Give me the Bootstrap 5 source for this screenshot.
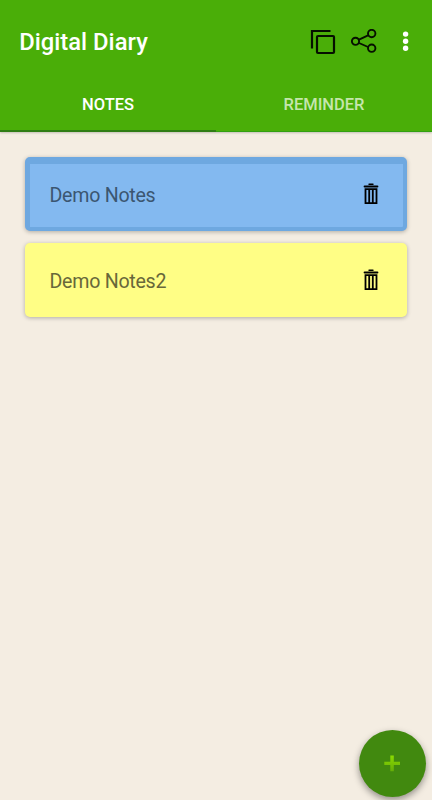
<!DOCTYPE html>
<html lang="en">
<head>
<meta charset="utf-8">
<meta name="viewport" content="width=device-width, initial-scale=1">
<title>Digital Diary</title>
<link href="https://cdn.jsdelivr.net/npm/bootstrap@5.3.0/dist/css/bootstrap.min.css" rel="stylesheet">
<style>
body{font-family:Roboto,"Liberation Sans",sans-serif;background:#f4ede2;height:800px;overflow:hidden}
.app-header{height:132px;background:#4aae08;border-bottom:1px solid #32a010;box-shadow:0 1px 2px rgba(0,0,0,.2)}
.app-bar{height:84px;padding:0 19px 0 19.2px}
.app-title{font-size:23.8px;font-weight:500;line-height:28px;color:#fff}
.app-bar svg,.note svg{display:block}
.bar-btn{border:0;padding:0;line-height:0}
.btn-share{margin-left:15px}
.btn-more{margin-left:24px}
.app-tabs{height:47px}
.app-tabs .nav-link{height:48px;padding:8px 0 0;font-size:16.5px;line-height:26px;font-weight:500;color:#c5e6ac;border-bottom:2px solid transparent;border-radius:0}
.app-tabs .nav-link.active{color:#fff;border-bottom-color:#2f7d14}
.notes-list{padding:25px 25px 0;gap:12px}
.note{height:74px;border:0;border-radius:5px;padding:0 27px 0 24.5px;box-shadow:0 1px 4px rgba(0,0,0,.28)}
.note-title{font-size:19.6px;line-height:24px;font-weight:400;letter-spacing:-.26px;padding-top:3px}
.note-blue{background:#83b9f0;border:solid #6ea8e0;border-width:7px 4px 4px 5px;padding:0 23px 0 19.5px}
.note-blue .note-title{color:#3b5671;padding:0}
.note-blue .bar-btn{margin-top:-4px}
.note-yellow{background:#fffe85}
.note-yellow .note-title{color:#68683a}
.note-yellow .bar-btn{margin-top:-1px}
.fab{width:67px;height:67px;right:6px;bottom:3px;background:#41890f;border:0;box-shadow:0 3px 7px rgba(0,0,0,.4)}
</style>
</head>
<body>
<header class="app-header position-relative">
  <div class="app-bar d-flex align-items-center justify-content-between">
    <h1 class="app-title mb-0">Digital Diary</h1>
    <div class="d-flex align-items-center">
      <button class="btn bar-btn" aria-label="Copy">
        <svg width="26" height="26" viewBox="0 0 26 26" fill="none" stroke="#061000" stroke-width="2.200"><path d="M2 19.500V2h18.500"/><rect x="7" y="7" width="17" height="17" rx="1"/></svg>
      </button>
      <button class="btn bar-btn btn-share" aria-label="Share">
        <svg width="26" height="26" viewBox="0 0 26 26" fill="none" stroke="#061000" stroke-width="1.900"><circle cx="4.500" cy="12.300" r="3.600"/><circle cx="20.700" cy="4.500" r="3.700"/><circle cx="20.700" cy="19.200" r="3.700"/><path d="M8 10.700 17.100 6.400M8 14l9.100 4"/></svg>
      </button>
      <button class="btn bar-btn btn-more" aria-label="More">
        <svg width="12" height="24" viewBox="0 0 12 24" fill="#fff"><circle cx="4.600" cy="4.100" r="2.700"/><circle cx="4.600" cy="11.200" r="2.700"/><circle cx="4.600" cy="18.300" r="2.700"/></svg>
      </button>
    </div>
  </div>
  <ul class="nav nav-fill app-tabs">
    <li class="nav-item col-6"><a class="nav-link active" href="#">NOTES</a></li>
    <li class="nav-item col-6"><a class="nav-link" href="#">REMINDER</a></li>
  </ul>
</header>
<main class="notes-list d-flex flex-column">
  <article class="card note note-blue flex-row align-items-center justify-content-between">
    <span class="note-title">Demo Notes</span>
    <button class="btn bar-btn" aria-label="Delete">
      <svg width="18" height="22" viewBox="0 0 18 22" fill="none" stroke="#000"><path d="M7 1.300h4" stroke-width="1.400" stroke-linecap="round"/><path d="M2.600 3.500h12.800" stroke-width="2" stroke-linecap="round"/><path d="M3.500 6.100h11v14h-11zM7.200 7v12.500M10.800 7v12.500" stroke-width="1.800"/></svg>
    </button>
  </article>
  <article class="card note note-yellow flex-row align-items-center justify-content-between">
    <span class="note-title">Demo Notes2</span>
    <button class="btn bar-btn" aria-label="Delete">
      <svg width="18" height="22" viewBox="0 0 18 22" fill="none" stroke="#000"><path d="M7 1.300h4" stroke-width="1.400" stroke-linecap="round"/><path d="M2.600 3.500h12.800" stroke-width="2" stroke-linecap="round"/><path d="M3.500 6.100h11v14h-11zM7.200 7v12.500M10.800 7v12.500" stroke-width="1.800"/></svg>
    </button>
  </article>
</main>
<button class="btn fab rounded-circle position-fixed d-flex align-items-center justify-content-center p-0" aria-label="Add note">
  <svg width="17" height="17" viewBox="0 0 17 17"><defs><linearGradient id="plus" x1="0" y1="0" x2="0" y2="1"><stop offset="0" stop-color="#8bdc00"/><stop offset="1" stop-color="#65ad08"/></linearGradient></defs><path d="M6.300.5h3.500v6.200h6.200v3.300H9.800v6.200H6.300V10H.3V6.700h6z" fill="url(#plus)"/></svg>
</button>
<script src="https://cdn.jsdelivr.net/npm/bootstrap@5.3.0/dist/js/bootstrap.bundle.min.js"></script>
</body>
</html>
